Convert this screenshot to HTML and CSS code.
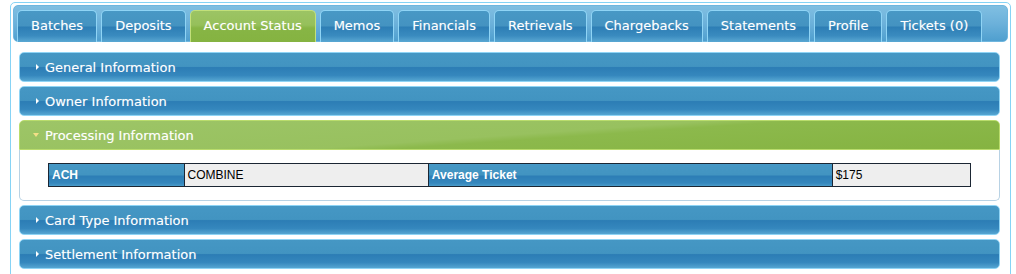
FILE: index.html
```html
<!DOCTYPE html>
<html lang="en">
<head>
    <meta charset="UTF-8">
    <title>Account Status</title>
    <link rel="stylesheet" href="styles.css">
</head>
<body>
    <div id="tabs">
        <!-- Tab Leiste -->
        <ul class="tab-nav">
            <li class="tab">Batches</li>
            <li class="tab">Deposits</li>
            <li class="tab active">Account Status</li>
            <li class="tab">Memos</li>
            <li class="tab">Financials</li>
            <li class="tab">Retrievals</li>
            <li class="tab">Chargebacks</li>
            <li class="tab">Statements</li>
            <li class="tab">Profile</li>
            <li class="tab">Tickets (0)</li>
        </ul>

        <!-- Accordion -->
        <div class="accordion">
            <h3 class="acc-header"><span class="arrow"></span>General Information</h3>
            <h3 class="acc-header"><span class="arrow"></span>Owner Information</h3>
            <h3 class="acc-header open"><span class="arrow"></span>Processing Information</h3>
            <div class="acc-content">
                <table class="info-table">
                    <tr>
                        <th class="col-a">ACH</th>
                        <td class="col-b">COMBINE</td>
                        <th class="col-c">Average Ticket</th>
                        <td class="col-d">$175</td>
                    </tr>
                </table>
            </div>
            <h3 class="acc-header"><span class="arrow"></span>Card Type Information</h3>
            <h3 class="acc-header"><span class="arrow"></span>Settlement Information</h3>
        </div>
    </div>
</body>
</html>
```

FILE: styles.css
```css
* {
    margin: 0;
    padding: 0;
    box-sizing: border-box;
}

body {
    font-family: 'DejaVu Sans', Verdana, sans-serif;
    font-size: 13px;
    background-color: #ffffff;
    padding: 2px 5px 0 10px;
}

#tabs {
    border: 1px solid #86d3f5;
    border-radius: 5px;
    padding: 2px 2px 20px 2px;
    height: 290px;
    background-color: #ffffff;
}

.tab-nav {
    list-style: none;
    display: flex;
    gap: 4px;
    padding: 4px 3px 0 3px;
    height: 37px;
    border-radius: 5px;
    background: linear-gradient(to bottom, #80bfe2 0%, #6cb1da 50%, #4f9fcf 100%);
    border: 1px solid #6fb6de;
}

.tab {
    height: 32px;
    padding: 0 13px;
    line-height: 30px;
    color: #ffffff;
    border: 1px solid #8fd4f5;
    border-bottom: none;
    border-radius: 5px 5px 0 0;
    background: linear-gradient(to bottom, #4898c5 0%, #4493c1 48%, #2d7eb5 52%, #3a8bbf 80%, #5aa8d3 100%);
    text-shadow: 0 0 1px rgba(255, 255, 255, 0.35);
    white-space: nowrap;
}

.tab.active {
    background: linear-gradient(to bottom, #9cc464 0%, #96c05b 45%, #87b545 55%, #85b341 100%);
    border-color: #c2e07a;
}

.accordion {
    padding: 10px 8px 0 6px;
}

.acc-header {
    font-size: 13px;
    font-weight: normal;
    color: #ffffff;
    height: 30px;
    padding-left: 16px;
    margin-top: 4px;
    border: 1px solid #8fd4f5;
    border-radius: 5px;
    background: linear-gradient(to bottom, #4597c4 0%, #4294c1 48%, #2c7db5 52%, #3587bd 80%, #56a6d2 100%);
    text-shadow: 0 0 1px rgba(255, 255, 255, 0.35);
    display: flex;
    align-items: center;
}

.acc-header:first-child {
    margin-top: 0;
}

.arrow {
    width: 0;
    height: 0;
    border-top: 3px solid transparent;
    border-bottom: 3px solid transparent;
    border-left: 3px solid #ffffff;
    margin-right: 6px;
}

.acc-header.open {
    border-radius: 5px 5px 0 0;
    border-color: #b9dc6c;
    background: linear-gradient(176deg, #9dc567 0%, #98c15f 50%, #8cb94c 56%, #85b341 100%);
}

.acc-header.open .arrow {
    border-left: 3px solid transparent;
    border-right: 3px solid transparent;
    border-top: 4px solid #f3df87;
    border-bottom: none;
    margin-left: -3px;
    margin-right: 6px;
}

/* Inhalt vom offenen Bereich */
.acc-content {
    border: 1px solid #b8d2e4;
    border-top: none;
    border-radius: 0 0 5px 5px;
    padding: 13px 28px 13px 28px;
    background-color: #ffffff;
}

.info-table {
    width: 100%;
    border-collapse: collapse;
    font-family: 'Liberation Sans', Arial, sans-serif;
    font-size: 11px;
}

.info-table th,
.info-table td {
    height: 23px;
    border: 1px solid #1b2633;
    padding: 0 3px;
    text-align: left;
}

.info-table th {
    color: #ffffff;
    font-size: 12px;
    font-weight: bold;
    background: linear-gradient(to bottom, #4597c4 0%, #4294c1 48%, #2c7db5 52%, #3587bd 85%, #4d9fcd 100%);
}

.info-table td {
    color: #000000;
    background-color: #eeeeee;
    font-size: 12px;
}

.col-a { width: 14.7%; }
.col-b { width: 26.5%; }
.col-c { width: 43.8%; }
.col-d { width: 15%; }
```
